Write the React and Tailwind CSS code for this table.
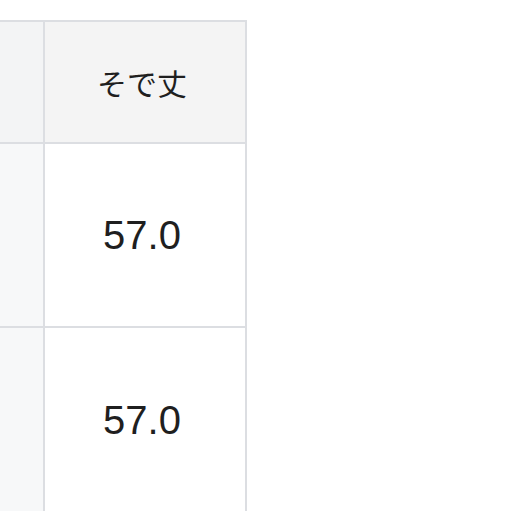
export default function App() {
  const rows = ["57.0", "57.0"];
  return (
    <div className="min-h-screen bg-white pt-[20px]">
      <div
        className="w-[247px] border-t-2 border-r-2 border-[#dcdee2] text-[#1f1f1f]"
        style={{ fontFamily: '"Liberation Sans", "Noto Sans CJK JP", sans-serif' }}
      >
        <div className="flex h-[122px] border-b-2 border-[#dcdee2]">
          <div className="w-[45px] border-r-2 border-[#dcdee2] bg-[#f3f4f5]"></div>
          <div
            className="flex flex-1 items-center justify-center bg-[#f4f4f4] pr-[6px] text-[30px]"
            style={{ fontFamily: '"Noto Sans CJK JP", sans-serif' }}
          >
            そで丈
          </div>
        </div>
        {rows.map((v, i) => (
          <div
            key={i}
            className={
              i === 0
                ? "flex h-[184px] border-b-2 border-[#dcdee2]"
                : "flex h-[184px]"
            }
          >
            <div className="w-[45px] border-r-2 border-[#dcdee2] bg-[#f7f8f9]"></div>
            <div className="flex flex-1 items-center justify-center bg-white pr-[6px] text-[40px]">
              {v}
            </div>
          </div>
        ))}
      </div>
    </div>
  );
}
